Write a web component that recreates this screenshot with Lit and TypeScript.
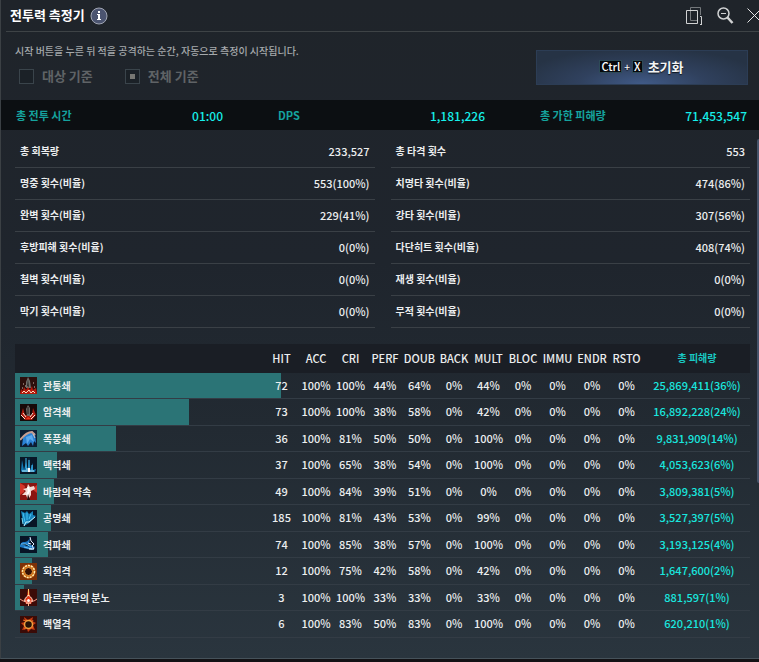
import { LitElement, html, css, svg, nothing } from "lit";
import { customElement, state } from "lit/decorators.js";

type Stat = [label: string, value: string];

interface Skill {
  icon: string;
  name: string;
  values: string[];
  total: string;
  bar: number;
}

const leftStats: Stat[] = [
  ["총 회복량", "233,527"],
  ["명중 횟수(비율)", "553(100%)"],
  ["완벽 횟수(비율)", "229(41%)"],
  ["후방피해 횟수(비율)", "0(0%)"],
  ["철벽 횟수(비율)", "0(0%)"],
  ["막기 횟수(비율)", "0(0%)"],
];

const rightStats: Stat[] = [
  ["총 타격 횟수", "553"],
  ["치명타 횟수(비율)", "474(86%)"],
  ["강타 횟수(비율)", "307(56%)"],
  ["다단히트 횟수(비율)", "408(74%)"],
  ["재생 횟수(비율)", "0(0%)"],
  ["무적 횟수(비율)", "0(0%)"],
];

const columns = ["HIT", "ACC", "CRI", "PERF", "DOUB", "BACK", "MULT", "BLOC", "IMMU", "ENDR", "RSTO"];

const skill = (
  icon: string, name: string, hit: number, cri: number, perf: number,
  doub: number, mult: number, total: string, bar: number,
): Skill => ({
  icon, name, total, bar,
  values: [`${hit}`, "100%", `${cri}%`, `${perf}%`, `${doub}%`, "0%", `${mult}%`, "0%", "0%", "0%", "0%"],
});

const skills: Skill[] = [
  skill("pierce", "관통쇄", 72, 100, 44, 64, 44, "25,869,411(36%)", 36.2),
  skill("dark", "암격쇄", 73, 100, 38, 58, 42, "16,892,228(24%)", 23.7),
  skill("storm", "폭풍쇄", 36, 81, 50, 50, 100, "9,831,909(14%)", 13.7),
  skill("pulse", "맥력쇄", 37, 65, 38, 54, 100, "4,053,623(6%)", 5.7),
  skill("wind", "바람의 약속", 49, 84, 39, 51, 0, "3,809,381(5%)", 5.3),
  skill("echo", "공명쇄", 185, 81, 43, 53, 99, "3,527,397(5%)", 4.9),
  skill("wave", "격파쇄", 74, 85, 38, 57, 100, "3,193,125(4%)", 4.5),
  skill("spin", "회전격", 12, 75, 42, 58, 42, "1,647,600(2%)", 2.3),
  skill("rage", "마르쿠탄의 분노", 3, 100, 33, 33, 33, "881,597(1%)", 1.2),
  skill("blaze", "백열격", 6, 83, 50, 83, 100, "620,210(1%)", 0),
];

const art: Record<string, unknown> = {
  pierce: svg`<rect width="17" height="17" fill="#2c0f0c"/>
    <path d="M8 0 L10 4 L11 11 L6 11 L6 5Z" fill="#70706c"/><path d="M8 2 L9 10 L7 9Z" fill="#2b2928"/>
    <path d="M0 17 L1 12 L3 14 L4 10 L6 13 L8 10 L10 13 L12 9 L13 13 L16 11 L17 17Z" fill="#b51a0b"/>
    <path d="M2 16 L4 14 L6 16 L9 13 L11 16 L13 14 L15 16" fill="none" stroke="#ffd9c0"/>
    <path d="M3 7h1M13 6h1M2 11h1M14 10h1M5 9h1" stroke="#d5bcae"/>`,
  dark: svg`<rect width="17" height="17" fill="#170908"/>
    <path d="M3 4 L1 11 L5 16 H12 L16 11 L13 4 L12 11 H5Z" fill="#a8180c"/>
    <path d="M8 1 L10 4 L10 12 L7 12 L6 5Z" fill="#6c6a67"/><path d="M8 3 L8 10" stroke="#242120"/>
    <path d="M1 11 L5 15 M3 9 L6 13 M15 11 L11 15 M13 9 L10 13" stroke="#ffe0cf"/>
    <path d="M6 15 L8 13 L11 15Z" fill="#e7381a"/>`,
  storm: svg`<rect width="17" height="17" fill="#0d1d33"/>
    <path d="M3 8 C5 3 10 2 15 3 L16 13 L14 11 L13 16 L11 12 L8 16 L6 13 L2 16Z" fill="#2a82d5"/>
    <path d="M6 7 L12 5 L14 12 L10 9 L7 14Z" fill="#5ba9ee"/>
    <path d="M0 10 C4 5 8 2 12 2 L15 5" fill="none" stroke="#c79e91" stroke-width="2"/>
    <path d="M13 4 L15 8" stroke="#d9c2b8"/>`,
  pulse: svg`<rect width="17" height="17" fill="#081727"/>
    <path d="M1 14 L2 3 L4 13 L6 5 L8 13 L9 0 L10 13 L13 6 L13 13 L16 12 L15 15 H2Z" fill="#1379b5"/>
    <path d="M6 1 L6 11 M9 3 L9 13 M12 8 L12 13" stroke="#43baf0"/>
    <path d="M2 14 H14 M6 12 H10" stroke="#b9f0ff"/><path d="M8 11 h2 v4 h-2z" fill="#fff"/>`,
  wind: svg`<rect width="17" height="17" fill="#8a1511"/>
    <path d="M0 0 L5 3 L4 9 L0 12Z M17 2 L12 6 L17 10Z" fill="#d3352a"/>
    <path d="M8 1 L10 4 L14 3 L15 6 L11 8 L11 12 L8 17 L6 12 L2 12 L6 8 L3 6 L7 5Z" fill="#f5d9d2"/>
    <path d="M8 4 L9 8 L7 12" fill="none" stroke="#fff" stroke-width="2"/>
    <path d="M8 11 L10 17 L7 17Z" fill="#25100f"/>`,
  echo: svg`<rect width="17" height="17" fill="#081525"/>
    <path d="M1 1 L5 3 L7 1 L9 4 L13 1 L13 5 L16 6 L12 10 L9 13 L4 16 L3 12Z" fill="#1783ba"/>
    <path d="M3 3 L5 12 M7 3 L7 10 M11 4 L9 9" stroke="#45c3f2"/>
    <path d="M4 16 L6 12 L9 12 L15 7" fill="none" stroke="#c5f3ff"/><path d="M2 8 L3 14" stroke="#7ddcf7"/>`,
  wave: svg`<rect width="17" height="17" fill="#081426"/>
    <path d="M0 9 C3 3 6 9 10 2 L9 8 L15 11 L13 14 L7 13 L0 11Z" fill="#1d77c4"/>
    <path d="M1 8 L6 8 L11 11 M4 11 L12 13" stroke="#68bff4"/>
    <path d="M10 1 L11 5 L14 8 L12 10 L14 13 M8 7 L11 8" fill="none" stroke="#e2edff"/>
    <path d="M9 13 H14" stroke="#fff"/>`,
  spin: svg`<rect width="17" height="17" fill="#7c3007"/>
    <circle cx="8.5" cy="8.5" r="7" fill="#c96714"/><circle cx="8.5" cy="8.5" r="4" fill="#331006"/>
    <circle cx="8.5" cy="8.5" r="6" fill="none" stroke="#ffedb0" stroke-width="1.5" stroke-dasharray="2 1"/>
    <circle cx="8.5" cy="8.5" r="4" fill="none" stroke="#f09a34"/>`,
  rage: svg`<rect width="17" height="17" fill="#3c0b08"/>
    <path d="M8 0 H9 L10 7 L13 11 L11 15 L6 15 L4 11 L7 7Z" fill="#e03416"/>
    <path d="M8.5 0 V7" stroke="#ffc164"/>
    <path d="M0 10 L3 12 L7 12 M17 10 L14 12 L10 12" fill="none" stroke="#ff9d85"/>
    <path d="M5 13 C4 9 7 8 8.5 6 C10 8 13 9 12 13 M6 14 H11" fill="none" stroke="#fff0de"/>
    <circle cx="8.5" cy="11.5" r="1.5" fill="#fff"/><path d="M8.5 14 V17" stroke="#ffb48d"/>`,
  blaze: svg`<rect width="17" height="17" fill="#3a0b07"/>
    <path d="M4 1 L8 4 L13 1 L12 5 L16 7 L13 9 L15 14 L11 13 L8 16 L7 13 L2 14 L4 10 L1 7 L5 6Z" fill="#c63c10"/>
    <circle cx="8.5" cy="8.5" r="4" fill="#231209" stroke="#f0a13f" stroke-width="1.5"/>
    <path d="M3 4 L6 5 M13 4 L12 6 M4 13 L6 12 M13 12 L11 11" stroke="#e86a24"/>`,
};

@customElement("skill-icon")
class SkillIcon extends LitElement {
  static properties = { name: { type: String } };
  declare name: string;

  static styles = css`
    :host { display: block; flex: none; width: 17px; height: 17px; }
    .art { display: block; width: 100%; height: 100%; }
  `;

  render() {
    return html`<svg class="art" viewBox="0 0 17 17" aria-hidden="true">${art[this.name] ?? nothing}</svg>`;
  }
}

@customElement("app-root")
class AppRoot extends LitElement {
  @state() private basis = "all";

  static styles = css`
    :host {
      display: flex;
      flex-direction: column;
      box-sizing: border-box;
      min-height: 100vh;
      padding-bottom: 4px;
      background: #131215;
      color: #eceeef;
      font: 500 11px/16px "Noto Sans CJK KR", "Noto Sans", sans-serif;
      overflow: hidden;
    }
    .panel {
      flex: 1;
      border-left: 1px solid #3b4044;
      border-bottom: 1px solid #46525a;
      background: linear-gradient(#1f242a, #1f252d 40%, #222a32 65%, #2a353e);
    }
    .title-bar {
      display: flex;
      align-items: center;
      height: 31px;
      margin-left: 5px;
      padding-left: 4px;
      border-bottom: 1px solid #3e4346;
    }
    .title { margin: 0; padding-bottom: 2px; font-size: 13px; line-height: 20px; font-weight: 700; color: #fff; }
    .tool { display: block; padding: 0; border: 0; background: none; color: #d8dadb; cursor: pointer; }
    .glyph { display: block; }
    .info { margin-left: 5px; }
    .tools { display: flex; align-items: center; gap: 13px; margin-left: auto; }
    .close { width: 12px; overflow: hidden; }

    .setup { display: flex; justify-content: space-between; height: 68px; padding: 0 11px 0 14px; }
    .hint { margin: 0; padding-top: 11px; font-size: 10px; color: #a5a9ac; }
    .choices { display: flex; gap: 32px; padding: 7px 0 0 4px; }
    .choice { display: flex; align-items: center; gap: 8px; font-size: 13px; line-height: 20px; font-weight: 700; color: #5f6366; }
    .box {
      appearance: none;
      display: grid;
      place-items: center;
      width: 15px;
      height: 15px;
      margin: 0;
      border: 1px solid #3a444b;
      background: #1b2127;
    }
    .box:checked::before { content: ""; width: 5px; height: 5px; background: #777773; }
    .reset {
      display: flex;
      align-items: center;
      justify-content: center;
      gap: 3px;
      width: 212px;
      height: 35px;
      margin-top: 18px;
      padding: 0 0 2px;
      border: 1px solid #2c3d55;
      background: radial-gradient(ellipse 60% 110% at 50% 100%, #405a87, #30415e 50%, #263345);
      color: #f4f5f6;
      font: inherit;
      cursor: pointer;
      text-shadow: 0 1px 1px #10151d;
    }
    .key {
      padding: 0 1px;
      outline: 1px solid #2d4b57;
      background: #07090c;
      font: 500 11px/11px "Noto Sans CJK KR", sans-serif;
      color: #fff;
    }
    .plus { font-size: 10px; }
    .reset-label { margin-left: 3px; font-size: 13px; font-weight: 700; }

    .summary {
      display: grid;
      grid-template-columns: repeat(3, 1fr);
      gap: 55px;
      height: 30px;
      margin: 0;
      padding: 0 12px 0 15px;
      background: #0c0f12;
      line-height: 31px;
    }
    .sum { display: flex; justify-content: space-between; color: #15a39e; }
    .sum dt { font-weight: 700; }
    .num { margin: 0; }
    .sum .num { font-size: 12px; color: #16f0ea; }

    .body { position: relative; }
    .stats { display: grid; grid-template-columns: 1fr 1fr; gap: 16px; padding: 6px 9px 16px 14px; }
    .list { margin: 0; }
    .stat {
      display: flex;
      justify-content: space-between;
      height: 31px;
      padding: 0 5px;
      border-bottom: 1px solid #3a4046;
      line-height: 30px;
    }
    .stat dt { font-size: 10px; font-weight: 700; }
    .table-wrap { padding: 0 9px 20px 14px; }
    .table { width: 100%; table-layout: fixed; border-collapse: separate; border-spacing: 0; }
    .name-col { width: 249px; }
    .col { width: 35px; }
    .col:nth-child(odd) { width: 34px; }
    .head { background: #1a1e25; }
    .table th, .table td { padding: 0; text-align: center; white-space: nowrap; font-weight: 500; box-sizing: border-box; }
    .table .head th { height: 29px; padding-bottom: 2px; }
    .row { position: relative; height: 27px; }
    .row:nth-child(odd) { height: 26px; }
    .row > * { border-bottom: 1px solid #333c45; }
    .bar { position: absolute; top: 0; bottom: 1px; left: 0; background: #2b7476; }
    .name { position: relative; display: flex; align-items: center; gap: 6px; padding-left: 5px; font-size: 10px; font-weight: 700; }
    .table .cell { position: relative; padding-bottom: 2px; }
    .table .total { color: #19e6df; }
    .table .total-head { font-size: 10px; font-weight: 700; color: #19c9c3; }
    .rail {
      position: absolute;
      top: 9px;
      right: 0;
      width: 2px;
      height: 344px;
      border-radius: 2px 0 0 2px;
      background: #46536a;
    }
  `;

  private stats(items: Stat[]) {
    return html`<dl class="list">
      ${items.map(([label, value]) => html`<div class="stat"><dt>${label}</dt><dd class="num">${value}</dd></div>`)}
    </dl>`;
  }

  private choice(value: string, label: string) {
    return html`<label class="choice">
      <input class="box" type="radio" name="basis" .checked=${this.basis === value}
        @change=${() => (this.basis = value)} />${label}
    </label>`;
  }

  render() {
    return html`
      <main class="panel">
        <header class="title-bar">
          <h1 class="title">전투력 측정기</h1>
          <button class="tool info" aria-label="정보">
            <svg class="glyph" width="18" height="18" viewBox="0 0 18 18">
              <circle cx="9" cy="9" r="8" fill="#4b5470" stroke="#a0a5b3" />
              <path d="M8 4h2v2H8z M7 7h3v5h1v1H7v-1h1V8H7z" fill="#fff" />
            </svg>
          </button>
          <div class="tools">
            <button class="tool" aria-label="창 복제">
              <svg class="glyph" width="18" height="18" viewBox="0 0 18 18" fill="none">
                <path d="M4.5 3V0.5h10V8 M4.5 4V13.5H12" stroke="#74787b" />
                <path d="M0.5 3.5h11v13h-11z" stroke="#d0d2d3" />
                <path d="M14 9.500h1.500V17 M14 17.500h2" stroke="#d0d2d3" />
              </svg>
            </button>
            <button class="tool" aria-label="축소">
              <svg class="glyph" width="17" height="18" viewBox="0 0 17 18" fill="none">
                <circle cx="6.5" cy="6.5" r="5.5" stroke="#d0d2d3" stroke-width="1.5" />
                <path d="M4 6.5h5" stroke="#d0d2d3" />
                <path d="M10.5 10.5L15.5 16" stroke="#d0d2d3" stroke-width="2.5" />
              </svg>
            </button>
            <button class="tool close" aria-label="닫기">
              <svg class="glyph" width="15" height="15" viewBox="0 0 15 15" fill="none">
                <path d="M0.5 0.5l14 14M14.5 0.5l-14 14" stroke="#e4e5e6" />
              </svg>
            </button>
          </div>
        </header>

        <section class="setup">
          <div>
            <p class="hint">시작 버튼을 누른 뒤 적을 공격하는 순간, 자동으로 측정이 시작됩니다.</p>
            <div class="choices">${this.choice("target", "대상 기준")}${this.choice("all", "전체 기준")}</div>
          </div>
          <button class="reset">
            <kbd class="key">Ctrl</kbd><span class="plus">+</span><kbd class="key">X</kbd>
            <span class="reset-label">초기화</span>
          </button>
        </section>

        <dl class="summary">
          <div class="sum"><dt>총 전투 시간</dt><dd class="num">01:00</dd></div>
          <div class="sum"><dt>DPS</dt><dd class="num">1,181,226</dd></div>
          <div class="sum"><dt>총 가한 피해량</dt><dd class="num">71,453,547</dd></div>
        </dl>

        <div class="body">
          <section class="stats">${this.stats(leftStats)}${this.stats(rightStats)}</section>
          <div class="table-wrap">
            <table class="table">
              <colgroup>
                <col class="name-col" />${columns.map(() => html`<col class="col" />`)}<col />
              </colgroup>
              <thead class="head">
                <tr>
                  <th></th>
                  ${columns.map((c) => html`<th scope="col">${c}</th>`)}
                  <th class="total-head" scope="col">총 피해량</th>
                </tr>
              </thead>
              <tbody>
                ${skills.map((s) => html`<tr class="row">
                  <th scope="row">
                    <div class="bar" style="width:${s.bar}%"></div>
                    <div class="name"><skill-icon name=${s.icon}></skill-icon>${s.name}</div>
                  </th>
                  ${s.values.map((v) => html`<td class="cell">${v}</td>`)}
                  <td class="cell total">${s.total}</td>
                </tr>`)}
              </tbody>
            </table>
          </div>
          <div class="rail"></div>
        </div>
      </main>
    `;
  }
}
